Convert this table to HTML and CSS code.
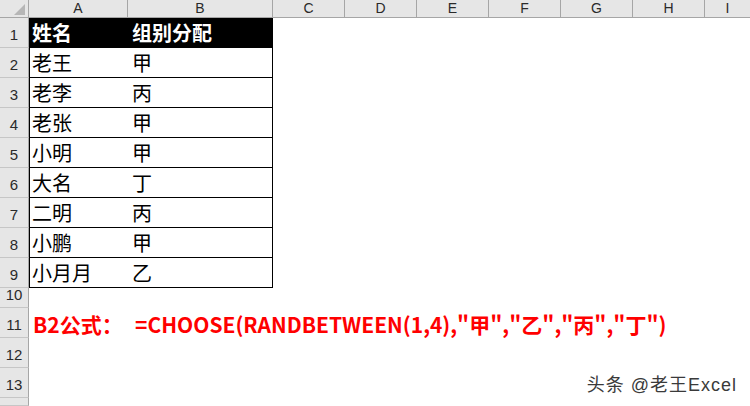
FILE: index.html
```html
<!DOCTYPE html>
<html lang="zh">
<head>
<meta charset="utf-8">
<title>CHOOSE</title>
<link rel="stylesheet" href="styles.css">
</head>
<body>
<div class="sheet">
  <div class="corner"><span class="tri"></span></div>
  <div class="ch">A</div><div class="ch">B</div><div class="ch">C</div><div class="ch">D</div><div class="ch">E</div><div class="ch">F</div><div class="ch">G</div><div class="ch">H</div><div class="ch last">I</div>

  <div class="rh">1</div><div class="c ta head">姓名</div><div class="c tb head">组别分配</div><div class="c blank"></div>
  <div class="rh">2</div><div class="c ta">老王</div><div class="c tb">甲</div><div class="c blank"></div>
  <div class="rh">3</div><div class="c ta">老李</div><div class="c tb">丙</div><div class="c blank"></div>
  <div class="rh">4</div><div class="c ta">老张</div><div class="c tb">甲</div><div class="c blank"></div>
  <div class="rh">5</div><div class="c ta">小明</div><div class="c tb">甲</div><div class="c blank"></div>
  <div class="rh">6</div><div class="c ta">大名</div><div class="c tb">丁</div><div class="c blank"></div>
  <div class="rh">7</div><div class="c ta">二明</div><div class="c tb">丙</div><div class="c blank"></div>
  <div class="rh">8</div><div class="c ta">小鹏</div><div class="c tb">甲</div><div class="c blank"></div>
  <div class="rh">9</div><div class="c ta">小月月</div><div class="c tb">乙</div><div class="c blank"></div>
  <div class="rh">10</div><div class="c full"></div>
  <div class="rh">11</div><div class="c red">B2公式：</div><div class="c red span">=CHOOSE(RANDBETWEEN(1,4),"甲","乙","丙","丁")</div>
  <div class="rh">12</div><div class="c full"></div>
  <div class="rh">13</div><div class="c full"></div>
  <div class="rh"></div><div class="c full"></div>
</div>
<div class="mark">头条 @老王Excel</div>
</body>
</html>
```
FILE: styles.css
```css
html, body {
  margin: 0;
  padding: 0;
  background: #ffffff;
  overflow: hidden;
}
body {
  width: 750px;
  height: 406px;
  position: relative;
  font-family: "Noto Sans CJK SC", "Noto Sans", sans-serif;
}
.sheet {
  display: grid;
  grid-template-columns: 29px 99px 145px repeat(6, 72px) 1fr;
  grid-template-rows: 18px repeat(9, 30px) 20px 30px 30px 30px 8px;
}
.corner {
  background: #e6e6e6;
  border-right: 1px solid #a6a6a6;
  border-bottom: 1px solid #a6a6a6;
  position: relative;
}
.tri {
  position: absolute;
  right: 3px;
  bottom: 2px;
  width: 0;
  height: 0;
  border-left: 11px solid transparent;
  border-bottom: 11px solid #b6b6b6;
}
.ch {
  background: #e6e6e6;
  border-right: 1px solid #a6a6a6;
  border-bottom: 1px solid #a6a6a6;
  font-family: "Liberation Sans", Arial, sans-serif;
  font-size: 14px;
  line-height: 17px;
  color: #2a2a2a;
  text-align: center;
}
.ch.last {
  border-right: none;
}
.rh {
  background: #e6e6e6;
  border-right: 1px solid #a6a6a6;
  border-bottom: 1px solid #c6c6c6;
  font-family: "Liberation Sans", Arial, sans-serif;
  font-size: 15px;
  color: #2a2a2a;
  display: flex;
  align-items: flex-end;
  justify-content: center;
  padding-bottom: 4px;
  box-sizing: border-box;
  line-height: 17px;
}
.c {
  display: flex;
  align-items: flex-end;
  white-space: nowrap;
  font-size: 20px;
  line-height: 20px;
  color: #000;
  padding: 0 0 4px 4px;
  box-sizing: border-box;
  min-width: 0;
}
.ta {
  border-left: 1px solid #000;
  border-bottom: 1px solid #000;
  padding-left: 2px;
}
.tb {
  border-right: 1px solid #000;
  border-bottom: 1px solid #000;
}
.head {
  background: #000;
  color: #fff;
  font-weight: 700;
}
.blank {
  grid-column: 4 / -1;
}
.full {
  grid-column: 2 / -1;
}
.red {
  color: #ff0000;
  font-weight: 700;
  font-size: 21px;
  padding-left: 4px;
  overflow: visible;
}
.span {
  grid-column: 3 / -1;
  padding-left: 7px;
}
.mark {
  position: absolute;
  right: 13px;
  bottom: 11px;
  font-family: "Liberation Sans", "Noto Sans CJK SC", sans-serif;
  font-size: 18px;
  line-height: 20px;
  letter-spacing: 1px;
  color: #3a3a3a;
  text-shadow: 0 0 1px #fff;
}
```
